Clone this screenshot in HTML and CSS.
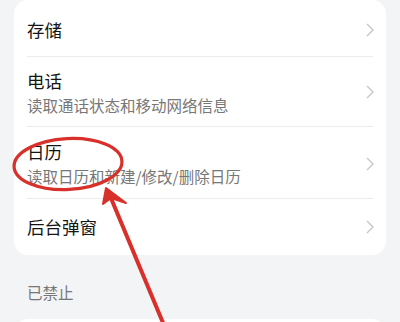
FILE: index.html
```html
<!DOCTYPE html>
<html lang="zh">
<head>
<meta charset="utf-8">
<link rel="stylesheet" href="styles.css">
</head>
<body>
<div class="page">
  <div class="card">
    <div class="row r1">
      <div class="text"><div class="title">存储</div></div>
      <svg class="chev" viewBox="0 0 8 14"><path d="M1 1 L7 7 L1 13"/></svg>
    </div>
    <div class="row r2">
      <div class="text"><div class="title">电话</div><div class="sub">读取通话状态和移动网络信息</div></div>
      <svg class="chev" viewBox="0 0 8 14"><path d="M1 1 L7 7 L1 13"/></svg>
    </div>
    <div class="row r3">
      <div class="text"><div class="title">日历</div><div class="sub">读取日历和新建/修改/删除日历</div></div>
      <svg class="chev" viewBox="0 0 8 14"><path d="M1 1 L7 7 L1 13"/></svg>
    </div>
    <div class="row r4 last">
      <div class="text"><div class="title">后台弹窗</div></div>
      <svg class="chev" viewBox="0 0 8 14"><path d="M1 1 L7 7 L1 13"/></svg>
    </div>
  </div>
  <div class="section">已禁止</div>
  <div class="card2"></div>
  <svg class="annot" viewBox="0 0 400 322" width="400" height="322">
    <ellipse cx="68" cy="164" rx="54" ry="25.5" transform="rotate(-3 68 164)" fill="none" stroke="#d8302a" stroke-width="3.2"/>
    <path d="M108 191 L166 330" stroke="#d8302a" stroke-width="4" fill="none" stroke-linecap="round"/>
    <path d="M106 188 L103 204 L111 198 L126 203 Z" fill="#d8302a" stroke="#d8302a" stroke-width="2" stroke-linejoin="round"/>
  </svg>
</div>
</body>
</html>
```
FILE: styles.css
```css
html, body {
  margin: 0;
  padding: 0;
}
body {
  background: #f3f4f6;
  font-family: "Noto Sans CJK SC", "Noto Sans", sans-serif;
  width: 400px;
  height: 322px;
  overflow: hidden;
}
.page {
  position: relative;
  width: 400px;
  height: 322px;
  overflow: hidden;
}
.card {
  margin: 0 14px;
  background: #ffffff;
  border-radius: 14px;
  display: flex;
  flex-direction: column;
}
.row {
  display: flex;
  align-items: center;
  justify-content: space-between;
  margin: 0 13px;
  border-bottom: 1px solid #ececec;
  box-sizing: border-box;
}
.row.last { border-bottom: none; }
.r1 { height: 57px; padding-top: 3px; }
.r2 { height: 70px; padding-top: 1px; }
.r3 { height: 72px; padding-top: 2px; }
.r4 { height: 56px; }
.text {
  display: flex;
  flex-direction: column;
  gap: 3px;
}
.title {
  font-size: 17.5px;
  line-height: 22px;
  color: #151515;
}
.sub {
  font-size: 15.5px;
  line-height: 20px;
  color: #777777;
}
.chev {
  width: 8px;
  height: 14px;
  margin-right: -1px;
}
.chev path {
  fill: none;
  stroke: #c6c6c6;
  stroke-width: 1.4;
}
.section {
  padding: 27px 0 0 27px;
  height: 37px;
  font-size: 15.5px;
  line-height: 20px;
  color: #777777;
}
.card2 {
  margin: 0 14px;
  height: 40px;
  background: #ffffff;
  border-radius: 14px;
}
.annot {
  position: absolute;
  left: 0;
  top: 0;
}
```
